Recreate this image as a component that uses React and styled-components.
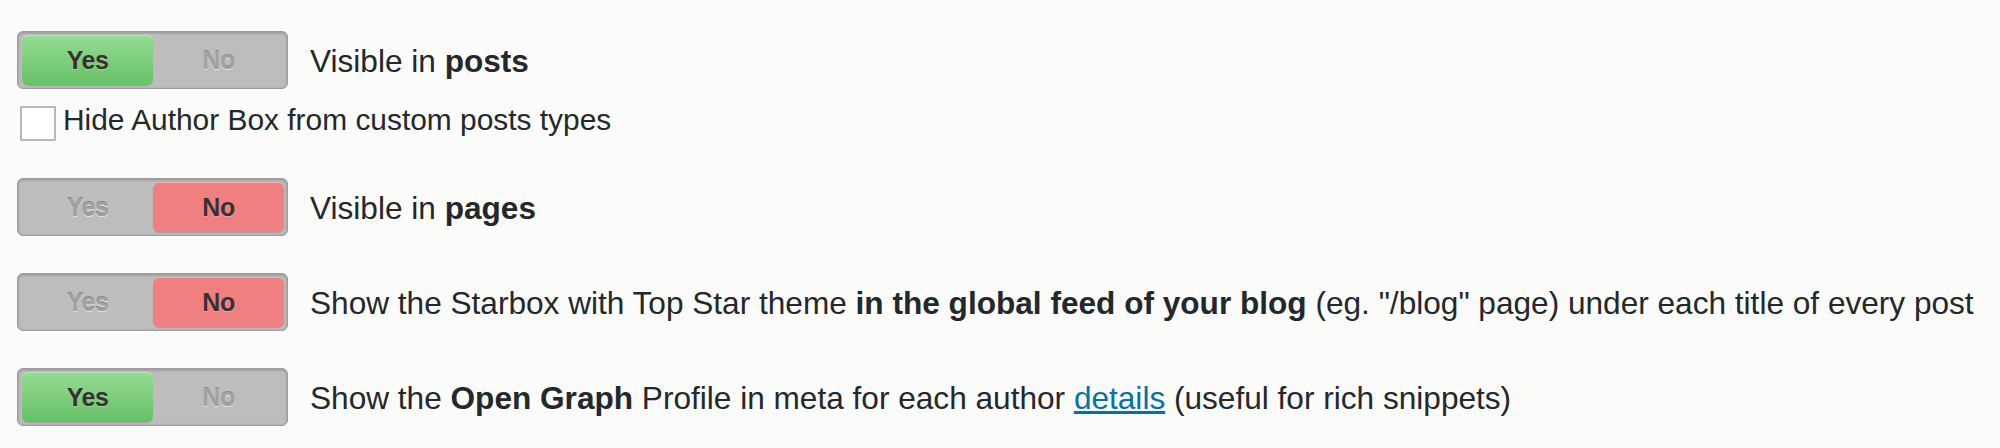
import React from 'react';
import styled, { createGlobalStyle } from 'styled-components';

const GlobalStyle = createGlobalStyle`
  body {
    margin: 0;
    background: #fbfbfa;
    font-family: 'Liberation Sans', Arial, sans-serif;
    color: #23282d;
  }
`;

const Settings = styled.div`
  display: flex;
  flex-direction: column;
  gap: 37px;
  padding: 31px 0 0 17px;
`;

const Row = styled.div`
  display: flex;
  align-items: center;
  gap: 22px;
  height: 58px;
`;

const CheckRow = styled.div`
  display: flex;
  align-items: center;
  gap: 7px;
  margin: -20px 0 0 3px;
  height: 35px;
`;

const Check = styled.input`
  appearance: none;
  margin: 0;
  width: 36px;
  height: 35px;
  box-sizing: border-box;
  border: 2px solid #b4b9be;
  background: #fff;
  border-radius: 1px;
`;

const Label = styled.span`
  font-size: ${(p) => (p.$small ? '29.9px' : '31.6px')};
  white-space: nowrap;
  line-height: 1;
  padding: ${(p) => (p.$small ? '0 0 7px' : '4px 0 0')};

  b {
    font-weight: 700;
  }
`;

const Link = styled.a`
  color: #0073aa;
  text-decoration: underline;
`;

const SwitchBox = styled.div`
  display: flex;
  box-sizing: border-box;
  width: 271px;
  height: 58px;
  padding: 3px 3px 3px 4px;
  background: #bdbdbd;
  border: 1px solid #9c9c9c;
  border-radius: 6px;
  box-shadow: inset 0 1px 3px rgba(0, 0, 0, 0.25), 0 1px 1px rgba(255, 255, 255, 0.6);
  flex-shrink: 0;
`;

const Half = styled.div`
  flex: 1;
  display: flex;
  align-items: center;
  justify-content: center;
  border-radius: 6px;
  font-family: 'Liberation Sans', Arial, sans-serif;
  font-weight: 700;
  font-size: 25px;
  letter-spacing: -0.5px;
  color: ${(p) => (p.$active ? '#3a3030' : '#a2a2a2')};
  text-shadow: ${(p) =>
    p.$active ? '0 1px 0 rgba(255,255,255,0.25)' : '0 1px 0 #e2e2e2, 0 -1px 0 #8a8a8a'};
  background: ${(p) =>
    !p.$active
      ? 'transparent'
      : p.$tone === 'yes'
      ? 'linear-gradient(#95db95, #66c166)'
      : '#f08080'};
  box-shadow: ${(p) =>
    p.$active
      ? 'inset 0 1px 0 rgba(255,255,255,0.35), 0 1px 1px rgba(0,0,0,0.15)'
      : 'none'};
`;

const options = [
  { id: 'posts', on: true, label: <>Visible in <b>posts</b></> },
  { id: 'pages', on: false, label: <>Visible in <b>pages</b></> },
  {
    id: 'feed',
    on: false,
    label: (
      <>
        Show the Starbox with Top Star theme <b>in the global feed of your blog</b> (eg.
        "/blog" page) under each title of every post
      </>
    ),
  },
  {
    id: 'og',
    on: true,
    label: (
      <>
        Show the <b>Open Graph</b> Profile in meta for each author{' '}
        <Link href="#details">details</Link> (useful for rich snippets)
      </>
    ),
  },
];

const Switch = ({ on }) => (
  <SwitchBox>
    <Half $active={on} $tone="yes">Yes</Half>
    <Half $active={!on} $tone="no">No</Half>
  </SwitchBox>
);

const App = () => {
  return (
    <>
      <GlobalStyle />
      <Settings>
        {options.map((opt) => (
          <React.Fragment key={opt.id}>
            <Row>
              <Switch on={opt.on} />
              <Label>{opt.label}</Label>
            </Row>
            {opt.id === 'posts' && (
              <CheckRow>
                <Check type="checkbox" />
                <Label $small>Hide Author Box from custom posts types</Label>
              </CheckRow>
            )}
          </React.Fragment>
        ))}
      </Settings>
    </>
  );
};

export default App;
